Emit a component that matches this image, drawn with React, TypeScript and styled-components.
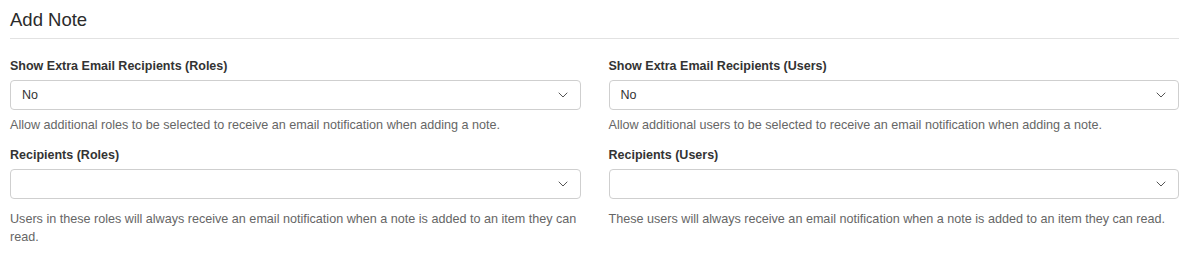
import React from "react";
import styled, { createGlobalStyle } from "styled-components";

const GlobalStyle = createGlobalStyle`
  body {
    margin: 0;
    background: #ffffff;
    font-family: "Liberation Sans", Arial, Helvetica, sans-serif;
    color: #333333;
  }
`;

type Field = {
  label: string;
  value: string;
  help: string;
  multi?: boolean;
};

const columns: Field[][] = [
  [
    {
      label: "Show Extra Email Recipients (Roles)",
      value: "No",
      help: "Allow additional roles to be selected to receive an email notification when adding a note.",
    },
    {
      label: "Recipients (Roles)",
      value: "",
      help: "Users in these roles will always receive an email notification when a note is added to an item they can read.",
      multi: true,
    },
  ],
  [
    {
      label: "Show Extra Email Recipients (Users)",
      value: "No",
      help: "Allow additional users to be selected to receive an email notification when adding a note.",
    },
    {
      label: "Recipients (Users)",
      value: "",
      help: "These users will always receive an email notification when a note is added to an item they can read.",
      multi: true,
    },
  ],
];

const Chevron: React.FC = () => (
  <svg width="10" height="6" viewBox="0 0 10 6" fill="none">
    <polyline
      points="1,1 5,5 9,1"
      stroke="#555"
      strokeWidth="1"
      strokeLinecap="round"
      strokeLinejoin="round"
    />
  </svg>
);

const App: React.FC = () => {
  return (
    <Page>
      <GlobalStyle />
      <Heading>Add Note</Heading>
      <Columns>
        {columns.map((col, i) => (
          <Column key={i}>
            {col.map((f) => (
              <FormGroup key={f.label}>
                <Label>{f.label}</Label>
                <Select>
                  <SelectValue>{f.value}</SelectValue>
                  <Chevron />
                </Select>
                <Help $multi={f.multi}>{f.help}</Help>
              </FormGroup>
            ))}
          </Column>
        ))}
      </Columns>
    </Page>
  );
};

const Page = styled.div`
  padding: 9px 12px 0 10px;
`;

const Heading = styled.h3`
  margin: 0;
  font-size: 18.5px;
  line-height: 22px;
  font-weight: 400;
  color: #2b2b2b;
  padding-bottom: 7px;
  border-bottom: 1px solid #e2e2e2;
`;

const Columns = styled.div`
  display: grid;
  grid-template-columns: 1fr 1fr;
  column-gap: 28px;
  padding-top: 18px;
`;

const Column = styled.div`
  display: flex;
  flex-direction: column;
  gap: 11.5px;
`;

const FormGroup = styled.div`
  display: flex;
  flex-direction: column;
`;

const Label = styled.label`
  font-size: 12.5px;
  line-height: 18px;
  font-weight: 700;
  color: #333333;
  margin-bottom: 5px;
`;

const Select = styled.div`
  box-sizing: border-box;
  height: 30px;
  display: flex;
  align-items: center;
  justify-content: space-between;
  padding: 0 12px 0 11px;
  border: 1px solid #cfcfcf;
  border-radius: 4px;
  background: #ffffff;
`;

const SelectValue = styled.span`
  font-size: 12.5px;
  color: #333333;
`;

const Help = styled.p<{ $multi?: boolean }>`
  margin: ${(p) => (p.$multi ? "10.5px" : "6px")} 0 0;
  font-size: 12.6px;
  line-height: 18.5px;
  color: #666666;
`;

export default App;
